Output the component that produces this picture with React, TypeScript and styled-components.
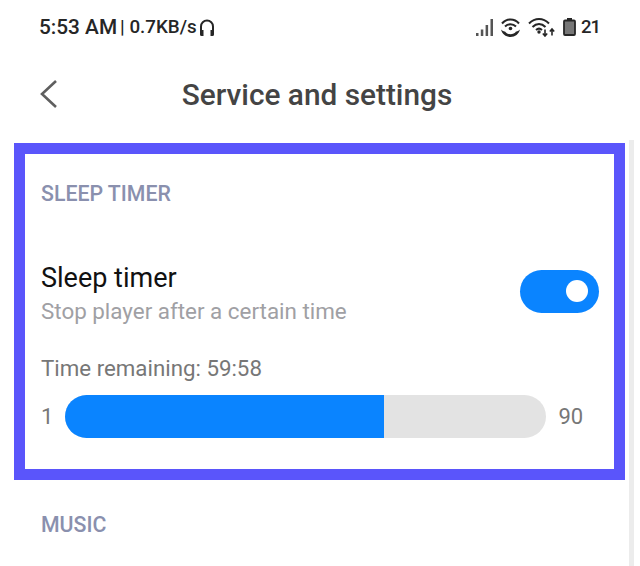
import styled, { createGlobalStyle } from "styled-components";

const GlobalStyle = createGlobalStyle`
  html, body {
    margin: 0;
    padding: 0;
    background: #fff;
  }
  body {
    font-family: Roboto, "Liberation Sans", sans-serif;
  }
`;

const Page = styled.div`
  width: 640px;
  height: 566px;
  display: flex;
  overflow: hidden;
  background: #fff;
`;
const Content = styled.div`
  width: 629px;
  flex: none;
  display: flex;
  flex-direction: column;
`;
const Scrollbar = styled.div`
  width: 5px;
  margin-top: 140px;
  background: #ececec;
`;
const StatusBar = styled.div`
  height: 54px;
  padding: 0 29px 0 39px;
  display: flex;
  align-items: center;
  justify-content: space-between;
  color: #262626;
`;
const StatusLeft = styled.div`
  display: flex;
  align-items: center;
  font-size: 20.8px;
  font-weight: 500;
`;
const Speed = styled.span`
  font-size: 18.8px;
  margin-left: 3px;
`;
const StatusRight = styled.div`
  display: flex;
  align-items: center;
  gap: 8px;
`;
const BatteryLevel = styled.span`
  margin-left: -3px;
  font-size: 18.5px;
  font-weight: 500;
  letter-spacing: -1px;
`;
const Header = styled.div`
  height: 79px;
  display: flex;
  align-items: center;
  position: relative;
  justify-content: center;
`;
const BackButton = styled.button`
  position: absolute;
  left: 38px;
  top: 24px;
  padding: 0;
  border: none;
  background: none;
  display: flex;
`;
const Title = styled.h1`
  margin: 0 0 -1px 5px;
  font-size: 29.8px;
  font-weight: 500;
  color: #444;
`;
const Frame = styled.section`
  margin: 10px 4px 0 14px;
  height: 337px;
  box-sizing: border-box;
  border: 11px solid #5a55fb;
  padding: 0 16px;
`;
const SectionLabel = styled.div`
  font-size: 21.3px;
  font-weight: 500;
  color: #8a90ae;
  line-height: 24px;
`;
const FrameLabel = styled(SectionLabel)`
  margin-top: 28px;
`;
const MusicLabel = styled(SectionLabel)`
  margin: 33px 0 0 41px;
`;
const SettingRow = styled.div`
  margin-top: 57px;
  display: flex;
  align-items: center;
  justify-content: space-between;
`;
const SettingName = styled.div`
  font-size: 27px;
  line-height: 30px;
  color: #111;
`;
const SettingHint = styled.div`
  margin-top: 5px;
  font-size: 22.4px;
  line-height: 27px;
  color: #a0a0a4;
`;
const Toggle = styled.div`
  width: 79px;
  height: 43px;
  margin: 0 -1px 6px 0;
  box-sizing: border-box;
  padding-right: 11px;
  border-radius: 22px;
  background: #0a84ff;
  display: flex;
  align-items: center;
  justify-content: flex-end;
`;
const Knob = styled.div`
  width: 22px;
  height: 22px;
  border-radius: 50%;
  background: #fff;
`;
const Remaining = styled.div`
  margin-top: 30px;
  font-size: 22.3px;
  line-height: 27px;
  color: #777;
`;
const SliderRow = styled.div`
  margin-top: 13px;
  display: flex;
  align-items: center;
  font-size: 22px;
  color: #777;
`;
const Track = styled.div`
  width: 481px;
  height: 43px;
  margin: 0 12px;
  border-radius: 22px;
  background: #e3e3e3;
  overflow: hidden;
`;
const Fill = styled.div`
  height: 100%;
  background: #0a84ff;
`;

const HeadsetIcon = styled.svg`
  margin-left: 2px;
`;

export default function App() {
  const remaining = 66.3;
  return (
    <Page>
      <GlobalStyle />
      <Content>
        <StatusBar>
          <StatusLeft>
            5:53 AM
            <Speed>| 0.7KB/s</Speed>
            <HeadsetIcon width="16" height="19" viewBox="0 0 16 19" fill="none">
              <path d="M2 14V8.500a6 6 0 0 1 12 0V14" stroke="#262626" strokeWidth="2" />
              <path d="M1 12h3.500v6H2.500A1.500 1.500 0 0 1 1 16.500zM15 12h-3.500v6h2a1.500 1.500 0 0 0 1.500-1.500z" fill="#262626" />
            </HeadsetIcon>
          </StatusLeft>
          <StatusRight>
            <svg width="17" height="17" viewBox="0 0 17 17" fill="#555">
              <rect x="0" y="14" width="2.500" height="3" />
              <rect x="4.800" y="10.500" width="2.500" height="6.500" />
              <rect x="9.600" y="6" width="2.500" height="11" />
              <rect x="14.500" y="0" width="2.500" height="17" />
            </svg>
            <svg width="19" height="19" viewBox="0 0 19 19" fill="none" stroke="#262626" strokeWidth="2">
              <path d="M1 5.500C5.500 0 13.500 0 18 5.500" />
              <path d="M4 8.500c3-3 8-3 11 0" />
              <circle cx="9.500" cy="10.500" r="1.800" fill="#262626" stroke="none" />
              <path d="M0 11.500c1 4.500 5 7.500 9.500 7.500s8.500-3 9.500-7.500c-1.500 1.500-3 2-4 2-1 1.800-3.500 2.800-5.500 2.800s-4.500-1-5.500-2.800c-1 0-2.500-.5-4-2z" fill="#262626" stroke="none" />
            </svg>
            <svg width="27" height="20" viewBox="0 0 27 20" fill="none" stroke="#262626" strokeWidth="2">
              <path d="M1 6.500C7 .5 15 .5 21 6.500" />
              <path d="M4.500 10c4-4 9-4 13 0" />
              <path d="M8 13c2-1.800 4-1.800 6 0" />
              <circle cx="11" cy="15" r="1.700" fill="#262626" stroke="none" />
              <path d="M17 12.500v6.500M14.800 16.500l2.200 2.500 2.200-2.500M24 18.500v-6M21.800 14.500l2.200-2.500 2.200 2.500" strokeWidth="1.600" />
            </svg>
            <svg width="13" height="18" viewBox="0 0 13 18">
              <rect x="4" y="0" width="5" height="2.500" fill="#262626" />
              <rect x="1" y="2.500" width="11" height="14.500" rx="1" fill="#777" stroke="#262626" strokeWidth="1.800" />
            </svg>
            <BatteryLevel>21</BatteryLevel>
          </StatusRight>
        </StatusBar>
        <Header>
          <BackButton aria-label="Back">
            <svg width="22" height="32" viewBox="0 0 22 32" fill="none">
              <path d="M18 3 4 16l14 13" stroke="#5f5f5f" strokeWidth="2.600" />
            </svg>
          </BackButton>
          <Title>Service and settings</Title>
        </Header>
        <Frame>
          <FrameLabel>SLEEP TIMER</FrameLabel>
          <SettingRow>
            <div>
              <SettingName>Sleep timer</SettingName>
              <SettingHint>Stop player after a certain time</SettingHint>
            </div>
            <Toggle>
              <Knob />
            </Toggle>
          </SettingRow>
          <Remaining>Time remaining: 59:58</Remaining>
          <SliderRow>
            1
            <Track>
              <Fill style={{ width: `${remaining}%` }} />
            </Track>
            90
          </SliderRow>
        </Frame>
        <MusicLabel>MUSIC</MusicLabel>
      </Content>
      <Scrollbar />
    </Page>
  );
}
